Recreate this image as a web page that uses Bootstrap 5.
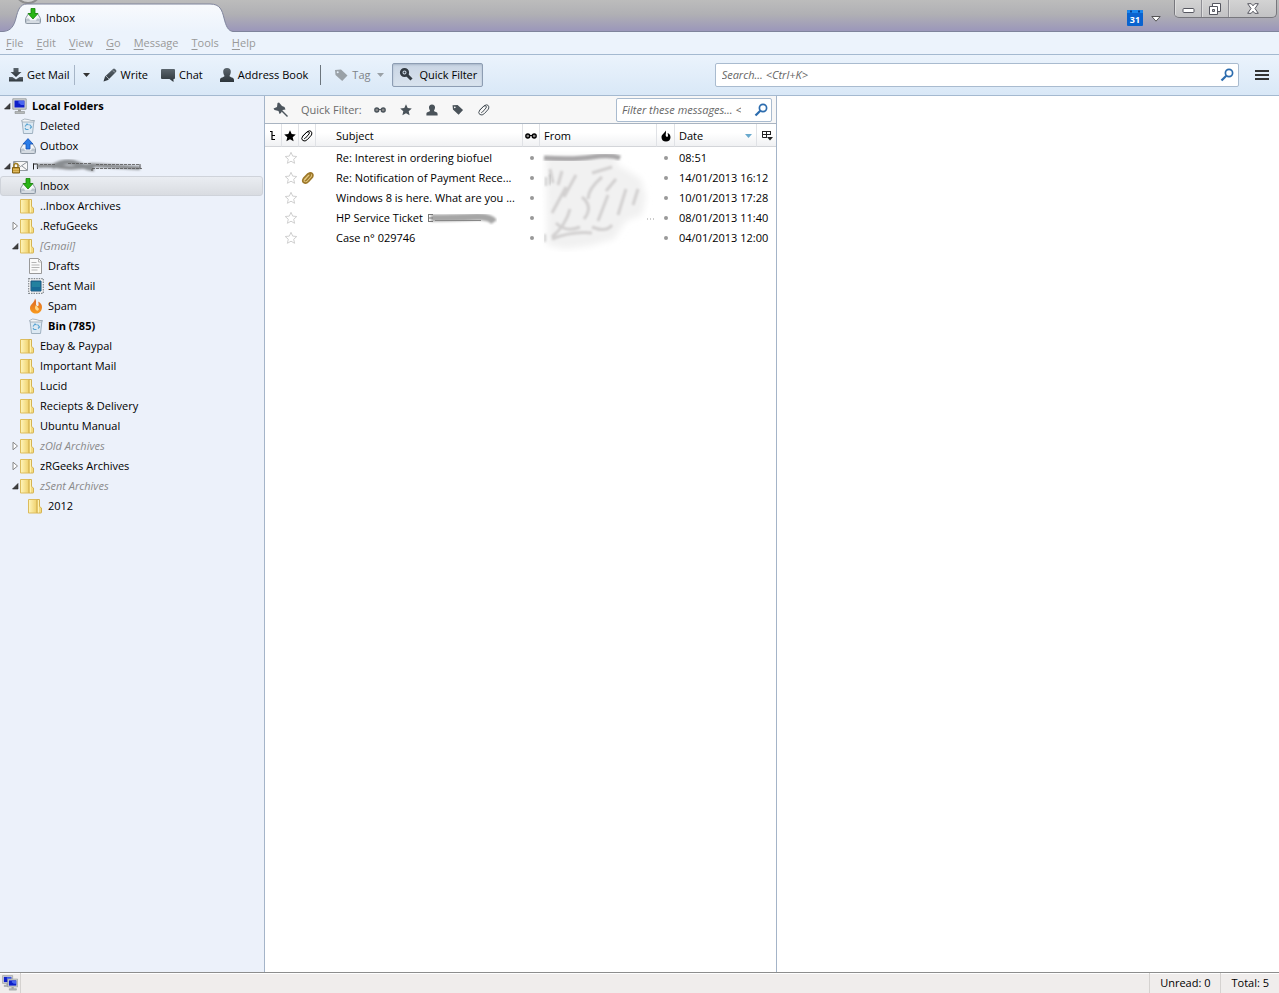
<!DOCTYPE html>
<html lang="en">
<head>
<meta charset="utf-8">
<meta name="viewport" content="width=device-width, initial-scale=1">
<title>Inbox</title>
<link rel="stylesheet" href="https://cdn.jsdelivr.net/npm/bootstrap@5.3.0/dist/css/bootstrap.min.css">
<style>
body{font-family:"Open Sans","Noto Sans",sans-serif;font-size:11px;line-height:20px;color:#000;background:#fff}
svg{display:block;flex:none}
button{font:inherit;color:inherit;background:none;border:0;padding:0}
.ic{width:16px;height:16px}
.titlebar{height:32px;background:linear-gradient(#bcbcbc,#b0b0b4 45%,#9c98ba 94%);box-shadow:inset 0 -1px #7f849c}
.orb{left:14px;top:-24px;width:28px;height:28px;border-radius:50%;background:#d2d2d2;border:2px solid #8d8d8d}
.tab-shape{left:3px;top:3px}
.tab-label{padding:8px 0 0 25px;gap:5px;height:29px}
.tab-label span{line-height:19px}
.cal{margin-top:10px}
.winctl{height:18px;border:1px solid #77777d;border-top:0;border-radius:0 0 5px 5px;background:linear-gradient(#d3d3d3,#c2c2c4);margin:0 2px 0 13px;overflow:hidden}
.winctl button{width:27px;display:flex;align-items:center;justify-content:center;border-right:1px solid #8f8f95;box-shadow:inset 1px 0 #ddd}
.winctl button:last-child{width:47px;border-right:0}
.menus{height:23px;background:#ecf3fc;border-bottom:1px solid #a4b9d0;padding-left:6px;gap:13px;color:#999;line-height:22px}
.menus a{color:inherit}
.menus u{text-underline-offset:2px}
.tools{height:41px;background:linear-gradient(#ebf3fc,#d9e8f7);border-bottom:1px solid #a4b9d0;padding:0 10px 0 8px}
.tools button{display:flex;align-items:center;gap:3px;height:24px;white-space:nowrap}
.next{margin-left:12px}
.split{width:1px;height:20px;background:#a6b5c7}
.tools .pressed{border:1px solid #8d9db3;border-radius:2px;background:linear-gradient(#c9d5e4,#d9e3ee);padding:0 5px;gap:5px;box-shadow:inset 0 1px 2px #a8b7c9}
.box{background:#fff;border:1px solid #a9bbcf;border-radius:2px;height:24px;padding:0 3px 0 6px}
.box input{border:0;outline:0;min-width:0;padding:0;background:none;font-style:italic;line-height:18px}
.box input::placeholder{color:#666;opacity:1}
.search{width:41vw}
.folders{width:265px;background:#ecf1fa;border-right:1px solid #a4b4c8}
.folders li{display:flex;align-items:center;height:20px;border:1px solid transparent;margin-right:1px}
.folders .lv1{padding-left:8px}
.folders .lv2{padding-left:16px}
.twist{width:11px;height:16px;flex:none;display:flex;align-items:center;justify-content:center}
.folders a{display:flex;align-items:center;gap:4px;color:#000;text-decoration:none}
.folders .dim a{color:#8a8a8a;font-style:italic}
.folders .picked{background:linear-gradient(#eaedf2,#d9dce1);border-color:#cfd3da;border-radius:3px}
.threads{width:512px;border-right:1px solid #a4b4c8}
.filterbar{height:28px;background:#f7f7f7;border-bottom:1px solid #a9b4c1;padding:0 4px 0 8px;color:#6b6b6b}
.filterbar .box{width:156px;padding:0 2px 0 5px}
.filterbar .toggles{gap:10px;padding-left:10px}
.mails{table-layout:fixed;width:511px;border-collapse:separate;border-spacing:0}
.mails th{height:23px;font-weight:400;padding:2px 0 0;background:linear-gradient(#fff 40%,#f0f1f3);border-bottom:1px solid #d3d5d9;border-right:1px solid #e0e2e6}
.mails td{height:20px;padding:0;white-space:nowrap;overflow:hidden}
.mails tbody tr:first-child td{height:21px;padding-top:1px}
.mails td svg,.mails th svg{margin:auto}
.mails .subj{padding-left:20px}
.mails .txt{padding-left:4px}
.mails .smudged{overflow:visible;position:relative}
.smudge{position:absolute;left:2px;top:0}
.rate{fill:#fff;stroke:#d0d0d0}
.readdot{width:4px;height:4px;border-radius:50%;background:#999;margin:auto}
.statusbar{height:21px;background:#f0edec;border-top:1px solid #8d8d8d;box-shadow:inset 0 1px #fff}
.statusbar>div{border-right:1px solid #d5d2d0;padding:0 10px}
.statusbar .net{padding:2px;width:21px}
</style>
</head>
<body class="vh-100 d-flex flex-column overflow-hidden">
<svg width="0" height="0" class="position-absolute" aria-hidden="true">
<defs>
<linearGradient id="gold" x2="1"><stop offset="0" stop-color="#fff6bd"/><stop offset="1" stop-color="#efd06a"/></linearGradient>
<linearGradient id="slate" x2="0" y2="1"><stop offset="0" stop-color="#5c666e"/><stop offset="1" stop-color="#2c343a"/></linearGradient>
<linearGradient id="tabfill" x2="0" y2="1"><stop offset="0" stop-color="#f8fafd"/><stop offset="1" stop-color="#ecf3fc"/></linearGradient>
<linearGradient id="flame" x2="0" y2="1"><stop offset="0" stop-color="#d9652a"/><stop offset="1" stop-color="#f99a1c"/></linearGradient>
<filter id="soft" x="-20%" y="-50%" width="140%" height="200%"><feGaussianBlur stdDeviation="1"/></filter>
<filter id="softer" x="-20%" y="-20%" width="140%" height="140%"><feGaussianBlur stdDeviation="3"/></filter>
<symbol id="tray" viewBox="0 0 16 16"><path d="M3.500 5.500h9l3 5v4q0 1-1 1h-13q-1 0-1-1v-4z" fill="#f4f6f8" stroke="#8d98a4"/><path d="M1 10.500h3l1 2h6l1-2h3v4.500h-14z" fill="#bcc5cf"/><path d="M2 14h12" stroke="#eef1f4"/></symbol>
<symbol id="inbox" viewBox="0 0 16 16"><use href="#tray"/><path d="M6 .5h4v5h3L8 11 3 5.500h3z" fill="#29b516" stroke="#168109" stroke-width=".8"/></symbol>
<symbol id="outbox" viewBox="0 0 16 16"><use href="#tray"/><path d="M6 11h4V6h3L8 .6 3 6h3z" fill="#2b7de8" stroke="#1551b4" stroke-width=".8"/></symbol>
<symbol id="folder" viewBox="0 0 16 16"><path d="M.5 1.500h8.500v13.500H.5z" fill="url(#gold)" stroke="#dcbc5c"/><path d="M9 1.500h2.500v7l2 1.500v4.500q0 .5-.5.500H9z" fill="#f4db80" stroke="#d5b352"/><path d="M10.500 2v12.500" stroke="#fff3b4"/></symbol>
<symbol id="bin" viewBox="0 0 16 16"><path d="M2 2.500h12l-1.500 13h-9z" fill="#dde9f3" stroke="#9fb1c0"/><path d="M1.500 2.500q3-2.500 6.500-1t6.500 1l-1 1.500h-11z" fill="#f3f5f7" stroke="#9aa7b2" stroke-width=".8"/><path d="M5 8.500l2-2.500 1.500 1M9.500 6.500l2 2.500-1.500 1.500M8.500 11.500H6l-1-1.500" fill="none" stroke="#5aa4d2" stroke-width="1.200"/></symbol>
<symbol id="pc" viewBox="0 0 16 16"><path d="M.8.8h13.400v10.400H.8z" fill="#d4d6d6" stroke="#8c9292" stroke-width=".8"/><path d="M2.500 2.500h10v7h-10z" fill="#0e1fc9"/><path d="M6.500 3h5.500v4H9L7.500 5.500h-1z" fill="#4865ef"/><path d="M6 11.500h3v2H6z" fill="#999"/><path d="M3 13.500h9.500v2H3z" fill="#b7baba" stroke="#8b8f8f" stroke-width=".6"/></symbol>
<symbol id="account" viewBox="0 0 16 16"><path d="M1.500 3.500h14v9h-14z" fill="#f7f7f7" stroke="#939aa0"/><path d="M2 4l6.500 4.500L15 4M10 8l5 4" fill="none" stroke="#8a9198"/><path d="M2 10V7.500q0-2 2-2t2 2V10" fill="none" stroke="#a07d22" stroke-width="1.500"/><path d="M.5 9.500h7v5.500h-7z" fill="#c99d38" stroke="#806117"/><path d="M1 11.500h6M1 13.500h6" stroke="#e4c46e" stroke-width=".7"/></symbol>
<symbol id="draft" viewBox="0 0 16 16"><path d="M1.500.5h9l3 3v12h-12z" fill="#fafafa" stroke="#999"/><path d="M10.500.5v3.500h3M3.500 4.500h5M3.500 7h8M3.500 9.500h8M3.500 12h6" fill="none" stroke="#b5b5b5"/></symbol>
<symbol id="stamp" viewBox="0 0 16 16"><path d="M.7.700h14.600v14.600H.7z" fill="#f4f4f4" stroke="#858b90" stroke-width="1.200" stroke-dasharray="1.500 1"/><path d="M3 3h10v10H3z" fill="#23819f" stroke="#17507f"/><path d="M3.500 9h9v3.500h-9z" fill="#186a96"/></symbol>
<symbol id="fire" viewBox="0 0 16 16"><path d="M7 .5c1.500 2 1 4 1 5.500 0 2 2 3 2.500 1.500.3-1 0-2.500-.3-4C13 5 14.200 7 14 9.700 13.600 13.500 11 15.500 8 15.500s-6-2-6-5.500C2 6 6.500 5 7 .5z" fill="url(#flame)"/><path d="M8 7q-2 3 0 5t3-1" fill="#ffd98c"/></symbol>
<symbol id="blackfire" viewBox="0 0 16 16"><path d="M7.500 2.500c1 2 .2 3 .2 4.500 0 2 2 2.500 2.300 1 0-1-.2-2-.4-3C11.700 6 12.500 7.500 12.500 9.200c0 2.800-1.800 4.300-4.500 4.300S3.500 12 3.500 9.200C3.500 6 7 5.500 7.500 2.500z"/></symbol>
<symbol id="star" viewBox="0 0 16 16"><path d="M8 2.300l1.700 3.800 4.100.4-3.100 2.700.9 4.100L8 11.200l-3.600 2.100.9-4.100-3.100-2.700 4.100-.4z"/></symbol>
<symbol id="clip" viewBox="0 0 16 16"><path d="M3.500 8.500L8 4q2.500-2 4-.7t.5 3.700l-4 4.500q-2.500 2.500-4.700 1t0-4.500l4-4q1.500-1 2.200 0t0 2L6.500 10q-1 1-1.500.3" fill="none" stroke="currentColor"/></symbol>
<symbol id="glasses" viewBox="0 0 16 16"><circle cx="4.800" cy="8" r="2" fill="#888" stroke="currentColor" stroke-width="1.300"/><circle cx="11.200" cy="8" r="2" fill="#888" stroke="currentColor" stroke-width="1.300"/><path d="M6.500 7.500h3" stroke="currentColor"/></symbol>
<symbol id="person" viewBox="0 0 16 16"><path d="M8 1c2.500 0 4 1.600 3.800 4-.1 2-1 3-1.300 4 .5 1.500 4.500 1 4.500 4v2H1v-2c0-3 4-2.500 4.500-4C5.200 8 4.300 7 4.200 5 4 2.600 5.500 1 8 1z"/></symbol>
<symbol id="tag" viewBox="0 0 16 16"><path fill-rule="evenodd" d="M2 3l6-.5 6.500 6L9.200 14 2.500 8zM4.700 4.300a1 1 0 100 2 1 1 0 000-2z"/></symbol>
<symbol id="lens" viewBox="0 0 16 16"><circle cx="10" cy="6" r="3.600" fill="none" stroke="currentColor" stroke-width="1.700"/><path d="M7.300 8.700L2.500 13.500" stroke="currentColor" stroke-width="2.200"/></symbol>
<symbol id="open" viewBox="0 0 8 8"><path d="M7 1.500v5.500H1.500z" fill="#404040" stroke="#222" stroke-width=".6"/></symbol>
<symbol id="shut" viewBox="0 0 8 10"><path d="M2 1.200L6.500 5 2 8.800z" fill="#fff" stroke="#888"/></symbol>
</defs>
</svg>

<header>
<div class="titlebar d-flex position-relative overflow-hidden">
<span class="orb position-absolute"></span>
<svg class="tab-shape position-absolute" width="230" height="29" viewBox="0 0 230 29"><path d="M0 28.500C8 28 11 23 13 15S17 1 24 1H207c10 0 12 6 14 14s4 13 9 13.500V29H0z" fill="url(#tabfill)"/><path d="M0 28.500C8 28 11 23 13 15S17 1 24 1H207c10 0 12 6 14 14s4 13 9 13.500" fill="none" stroke="#7f849c"/></svg>
<div class="tab-label d-flex position-relative"><svg class="ic"><use href="#inbox"/></svg><span>Inbox</span></div>
<button class="cal ms-auto align-self-start" aria-label="Calendar"><svg class="ic" viewBox="0 0 16 16"><rect width="16" height="16" rx="1" fill="#0a63cf"/><path d="M0 3h16V1.500Q16 0 15 0H1Q0 0 0 1.500z" fill="#1b87ed"/><path d="M3 1.500h2M11 1.500h2" stroke="#073f91" stroke-width="2"/><text x="8" y="12.500" font-size="9" font-weight="700" text-anchor="middle" fill="#fff">31</text></svg></button>
<button class="align-self-start mt-3 ms-2" aria-label="List all tabs"><svg width="10" height="6" viewBox="0 0 10 6"><path d="M.8.500h8.400L5 5.200z" fill="#fff" stroke="#555"/></svg></button>
<div class="winctl d-flex">
<button aria-label="Minimise"><svg width="13" height="8" viewBox="0 0 13 8"><rect x="1" y="3.500" width="11" height="4" rx="1" fill="#fff" stroke="#55565f"/></svg></button>
<button aria-label="Restore"><svg width="12" height="12" viewBox="0 0 12 12"><path d="M3.500.5h8v8h-8z" fill="#fff" stroke="#55565f"/><path d="M.5 3.500h8v8h-8z" fill="#fff" stroke="#55565f"/><path d="M3.500 6.500h2v2h-2z" fill="#c8c8ca" stroke="#55565f"/></svg></button>
<button aria-label="Close"><svg width="12" height="11" viewBox="0 0 12 11"><path d="M.7.700h3.500L6 2.800 7.800.700h3.500L8 5.500l3.300 4.800H7.800L6 8.200l-1.800 2.100H.7L4 5.500z" fill="#fff" stroke="#55565f"/></svg></button>
</div>
</div>
<nav class="menus d-flex" aria-label="Menu">
<a href="#" class="text-decoration-none"><u>F</u>ile</a><a href="#" class="text-decoration-none"><u>E</u>dit</a><a href="#" class="text-decoration-none"><u>V</u>iew</a><a href="#" class="text-decoration-none"><u>G</u>o</a><a href="#" class="text-decoration-none"><u>M</u>essage</a><a href="#" class="text-decoration-none"><u>T</u>ools</a><a href="#" class="text-decoration-none"><u>H</u>elp</a>
</nav>
<div class="tools d-flex align-items-center">
<button><svg class="ic" viewBox="0 0 16 16" fill="url(#slate)"><path d="M5.500 1h5v4h3L8 10 2.500 5h3z"/><path d="M1 10h3.500L8 12.500l3.500-2.500H15v4.500H1z"/></svg>Get Mail</button>
<span class="split ms-1"></span>
<button class="ms-2" aria-label="Get Mail options"><svg width="7" height="4" viewBox="0 0 7 4"><path d="M0 0h7L3.500 4z" fill="#333"/></svg></button>
<button class="next"><svg class="ic" viewBox="0 0 16 16" fill="url(#slate)"><path d="M1.500 14.500l1.500-5L11 2q1-1 2 0l1 1q1 1 0 2l-8 8z"/><path d="M4 9l3 3M11 3.500l2 2" stroke="#c3cad1" stroke-width=".8"/></svg>Write</button>
<button class="next"><svg class="ic" viewBox="0 0 16 16" fill="url(#slate)"><path d="M2 2h12q1 0 1 1v8q0 1-1 1h-.5v3l-4-3H2q-1 0-1-1V3q0-1 1-1z"/></svg>Chat</button>
<button class="ms-3"><svg class="ic" fill="url(#slate)"><use href="#person"/></svg>Address Book</button>
<span class="split next bg-secondary"></span>
<button class="next" disabled style="color:#7e8389"><svg class="ic" fill="#9aa1a7"><use href="#tag"/></svg>Tag<svg class="ms-1" width="7" height="4" viewBox="0 0 7 4"><path d="M0 0h7L3.500 4z" fill="#9aa1a7"/></svg></button>
<button class="pressed ms-2" aria-pressed="true"><svg class="ic" viewBox="0 0 16 16"><circle cx="6.500" cy="5.500" r="3.300" fill="none" stroke="#333b42" stroke-width="2.600"/><circle cx="6.500" cy="5.500" r="1" fill="#333b42"/><path d="M8.500 7.500l5 5" stroke="#333b42" stroke-width="3"/></svg>Quick Filter</button>
<div class="box search d-flex align-items-center ms-auto"><input type="search" class="flex-grow-1" placeholder="Search... &lt;Ctrl+K&gt;" aria-label="Search"><svg class="ic" color="#2c6cae"><use href="#lens"/></svg></div>
<button class="ms-3" aria-label="Application menu"><svg width="14" height="12" viewBox="0 0 14 12"><path d="M0 2h14M0 6h14M0 10h14" stroke="#333" stroke-width="2"/></svg></button>
</div>
</header>

<main class="d-flex flex-grow-1" style="min-height:0">
<nav class="folders flex-shrink-0" aria-label="Folders">
<ul class="list-unstyled mb-0">
<li class="fw-bold"><button class="twist" aria-label="Collapse"><svg width="8" height="8"><use href="#open"/></svg></button><a href="#"><svg class="ic"><use href="#pc"/></svg>Local Folders</a></li>
<li class="lv1"><span class="twist"></span><a href="#"><svg class="ic"><use href="#bin"/></svg>Deleted</a></li>
<li class="lv1"><span class="twist"></span><a href="#"><svg class="ic"><use href="#outbox"/></svg>Outbox</a></li>
<li><button class="twist" aria-label="Collapse"><svg width="8" height="8"><use href="#open"/></svg></button><a href="#" aria-label="Mail account"><svg class="ic"><use href="#account"/></svg><svg width="112" height="14" viewBox="0 0 112 14"><path d="M1.500 4.500v6M1 5h4.500v5" fill="none" stroke="#222"/><g filter="url(#soft)" fill="none"><path d="M5 7Q18 6 30 8t30-2l48 3" stroke="#8a8d90" stroke-width="4"/><path d="M20 8Q34 0 46 5t16 5" stroke="#8a8e92" stroke-width="5"/></g><path d="M36 4.500h24M64 5.500h44M60 9.500h50M8 5.500h16" stroke="#555" stroke-width=".8" stroke-dasharray="3 1"/><path d="M60 10v2M108 5v5" stroke="#555"/></svg></a></li>
<li class="lv1 picked"><span class="twist"></span><a href="#" aria-current="page"><svg class="ic"><use href="#inbox"/></svg>Inbox</a></li>
<li class="lv1"><span class="twist"></span><a href="#"><svg class="ic"><use href="#folder"/></svg>..Inbox Archives</a></li>
<li class="lv1"><button class="twist" aria-label="Expand"><svg width="8" height="10"><use href="#shut"/></svg></button><a href="#"><svg class="ic"><use href="#folder"/></svg>.RefuGeeks</a></li>
<li class="lv1 dim"><button class="twist" aria-label="Collapse"><svg width="8" height="8"><use href="#open"/></svg></button><a href="#"><svg class="ic"><use href="#folder"/></svg>[Gmail]</a></li>
<li class="lv2"><span class="twist"></span><a href="#"><svg class="ic"><use href="#draft"/></svg>Drafts</a></li>
<li class="lv2"><span class="twist"></span><a href="#"><svg class="ic"><use href="#stamp"/></svg>Sent Mail</a></li>
<li class="lv2"><span class="twist"></span><a href="#"><svg class="ic"><use href="#fire"/></svg>Spam</a></li>
<li class="lv2 fw-bold"><span class="twist"></span><a href="#"><svg class="ic"><use href="#bin"/></svg>Bin (785)</a></li>
<li class="lv1"><span class="twist"></span><a href="#"><svg class="ic"><use href="#folder"/></svg>Ebay &amp; Paypal</a></li>
<li class="lv1"><span class="twist"></span><a href="#"><svg class="ic"><use href="#folder"/></svg>Important Mail</a></li>
<li class="lv1"><span class="twist"></span><a href="#"><svg class="ic"><use href="#folder"/></svg>Lucid</a></li>
<li class="lv1"><span class="twist"></span><a href="#"><svg class="ic"><use href="#folder"/></svg>Reciepts &amp; Delivery</a></li>
<li class="lv1"><span class="twist"></span><a href="#"><svg class="ic"><use href="#folder"/></svg>Ubuntu Manual</a></li>
<li class="lv1 dim"><button class="twist" aria-label="Expand"><svg width="8" height="10"><use href="#shut"/></svg></button><a href="#"><svg class="ic"><use href="#folder"/></svg>zOld Archives</a></li>
<li class="lv1"><button class="twist" aria-label="Expand"><svg width="8" height="10"><use href="#shut"/></svg></button><a href="#"><svg class="ic"><use href="#folder"/></svg>zRGeeks Archives</a></li>
<li class="lv1 dim"><button class="twist" aria-label="Collapse"><svg width="8" height="8"><use href="#open"/></svg></button><a href="#"><svg class="ic"><use href="#folder"/></svg>zSent Archives</a></li>
<li class="lv2"><span class="twist"></span><a href="#"><svg class="ic"><use href="#folder"/></svg>2012</a></li>
</ul>
</nav>

<section class="threads flex-shrink-0">
<div class="filterbar d-flex align-items-center">
<button aria-label="Keep filters applied"><svg class="ic" viewBox="0 0 16 16"><path d="M4.500 1L6 .5l3 3.500 2.500 1 1 2.500-3 .5L8 11l-1.500 1-1-3-4-1L.500 6.500 4 5z" fill="#4d565e"/><path d="M8 8l6.500 6.500" stroke="#4d565e" stroke-width="1.400"/></svg></button>
<span class="next ms-2 ps-1">Quick Filter:</span>
<div class="toggles d-flex align-items-center" style="color:#4a535a;fill:#4a535a">
<button aria-label="Unread"><svg class="ic"><use href="#glasses"/></svg></button>
<button aria-label="Starred"><svg class="ic"><use href="#star"/></svg></button>
<button aria-label="Contact"><svg class="ic" viewBox="-2 -2 20 20"><use href="#person" width="16" height="16"/></svg></button>
<button aria-label="Tags"><svg class="ic" viewBox="-1 -1 19 19"><use href="#tag" width="16" height="16"/></svg></button>
<button aria-label="Attachment"><svg class="ic"><use href="#clip"/></svg></button>
</div>
<div class="box d-flex align-items-center ms-auto"><input type="search" class="flex-grow-1" placeholder="Filter these messages... &lt;Ctrl+Shift+K&gt;" aria-label="Filter these messages"><svg class="ic" color="#2c6cae"><use href="#lens"/></svg></div>
</div>
<table class="mails">
<colgroup><col style="width:17px"><col style="width:17px"><col style="width:17px"><col style="width:207px"><col style="width:17px"><col style="width:117px"><col style="width:18px"><col style="width:82px"><col style="width:19px"></colgroup>
<thead><tr>
<th aria-label="Thread"><svg width="12" height="16" viewBox="0 0 12 16"><path d="M3 3.500h2v3M5 6v5.500h3M5 7.500h3" fill="none" stroke="#000" stroke-width="1.200"/></svg></th>
<th aria-label="Starred"><svg class="ic"><use href="#star"/></svg></th>
<th aria-label="Attachment"><svg class="ic"><use href="#clip"/></svg></th>
<th class="subj">Subject</th>
<th aria-label="Read"><svg class="ic"><use href="#glasses"/></svg></th>
<th class="txt">From</th>
<th aria-label="Junk"><svg class="ic"><use href="#blackfire"/></svg></th>
<th class="txt"><div class="d-flex align-items-center">Date<svg width="7" height="4" viewBox="0 0 7 4" class="me-1"><path d="M0 0h7L3.500 4z" fill="#69a9cd"/></svg></div></th>
<th class="border-end-0" aria-label="Choose columns"><svg width="12" height="14" viewBox="0 0 12 14"><path d="M1 2.500h9M1.500 2v6.500H6M5.500 2v6.500M9.500 2v4M1 5.500h9" fill="none" stroke="#222"/><path d="M6 8h6L9 11.500z" fill="#222"/></svg></th>
</tr></thead>
<tbody>
<tr><td></td><td><svg class="ic rate"><use href="#star"/></svg></td><td></td><td class="subj">Re: Interest in ordering biofuel</td><td><div class="readdot"></div></td>
<td class="smudged"><svg class="smudge" width="114" height="105" viewBox="0 0 114 105" role="img" aria-label="Obscured sender names"><g filter="url(#softer)"><path d="M4 9h74l-5 8 10 5 16 10 5 18-4 18-16 6-12 18-25 7-24 3-18-4z" fill="#f1f1f1"/></g><g fill="none" stroke="#d2d0d0" stroke-width="3" filter="url(#soft)"><path d="M8 22l3 14M20 24l-4 14M24 40L10 66M34 28L22 50M28 62q-4 16-18 28M40 50q12 10 2 22M60 30q-14 12-14 22M66 48L56 74M74 32l-10 12M84 42l-8 26M96 42l-5 16M50 80q14 6 20-2M14 76q10 10 24 4M10 92q20-8 40-6M50 26l20-6"/></g><path d="M2 11q30 2 48-1t28 1" fill="none" stroke="#a9a7a9" stroke-width="5" filter="url(#soft)"/><path d="M4 30v9M8 27v11M3 87v8" stroke="#999" filter="url(#soft)"/><path d="M105 72h7" stroke="#999" stroke-dasharray="1 2"/></svg></td>
<td><div class="readdot"></div></td><td class="txt">08:51</td><td></td></tr>
<tr><td></td><td><svg class="ic rate"><use href="#star"/></svg></td><td><svg class="ic" viewBox="0 0 16 16"><path d="M3.500 8.500L8 4q2.500-2 4-.7t.5 3.700l-4 4.500q-2.500 2.500-4.700 1t0-4.500z" fill="#e5ca80"/><use href="#clip" color="#9d782b" stroke-width="1.700"/></svg></td><td class="subj">Re: Notification of Payment Rece...</td><td><div class="readdot"></div></td><td></td><td><div class="readdot"></div></td><td class="txt" colspan="2">14/01/2013 16:12</td></tr>
<tr><td></td><td><svg class="ic rate"><use href="#star"/></svg></td><td></td><td class="subj">Windows 8 is here. What are you ...</td><td><div class="readdot"></div></td><td></td><td><div class="readdot"></div></td><td class="txt" colspan="2">10/01/2013 17:28</td></tr>
<tr><td></td><td><svg class="ic rate"><use href="#star"/></svg></td><td></td><td class="subj"><div class="d-flex align-items-center">HP Service Ticket<svg class="ms-1" width="70" height="16" viewBox="0 0 70 16"><path d="M4 8q25 0 42-1t21 5" fill="none" stroke="#a6a6a6" stroke-width="7" filter="url(#soft)"/><path d="M1.500 4v8M1 4.500h5M1 8h5M1 11.500h5" stroke="#777"/><path d="M8 10.500h46" stroke="#888"/></svg></div></td><td><div class="readdot"></div></td><td></td><td><div class="readdot"></div></td><td class="txt" colspan="2">08/01/2013 11:40</td></tr>
<tr><td></td><td><svg class="ic rate"><use href="#star"/></svg></td><td></td><td class="subj">Case n° 029746</td><td><div class="readdot"></div></td><td></td><td><div class="readdot"></div></td><td class="txt" colspan="2">04/01/2013 12:00</td></tr>
</tbody>
</table>
</section>
<section class="flex-grow-1 bg-white" aria-label="Message"></section>
</main>

<footer class="statusbar d-flex">
<div class="net"><svg class="ic" viewBox="0 0 16 16"><svg width="12" height="12"><use href="#pc"/></svg><svg x="5" y="3" width="12" height="13"><use href="#pc"/></svg></svg></div>
<div class="ms-auto p-0"></div>
<div>Unread: 0</div>
<div class="border-0">Total: 5</div>
</footer>
<script src="https://cdn.jsdelivr.net/npm/bootstrap@5.3.0/dist/js/bootstrap.bundle.min.js"></script>
</body>
</html>
